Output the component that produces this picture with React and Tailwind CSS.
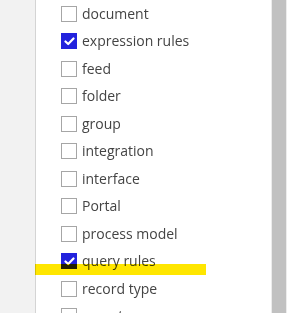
import React from "react";

const items = [
  ["document", false],
  ["expression rules", true],
  ["feed", false],
  ["folder", false],
  ["group", false],
  ["integration", false],
  ["interface", false],
  ["Portal", false],
  ["process model", false],
  ["query rules", true],
  ["record type", false],
  ["report", false],
];

function Box({ checked }) {
  if (checked) {
    return (
      <div className="w-4 h-4 bg-[#2222dd] flex items-center justify-center shrink-0">
        <svg width="11" height="9" viewBox="0 0 11 9">
          <path d="M1.5 4.5 L4.2 7 L9.5 1.5" fill="none" stroke="white" strokeWidth="2.2" strokeLinecap="round" strokeLinejoin="round" />
        </svg>
      </div>
    );
  }
  return <div className="w-4 h-4 border border-[#a6a6a6] bg-white shrink-0" />;
}

export default function App() {
  return (
    <div className="relative w-[301px] h-[313px] overflow-hidden bg-white flex" style={{ fontFamily: '"Open Sans", sans-serif' }}>
      <div className="w-[36px] h-full bg-[#f2f2f2] border-r border-[#d4d4d4] shrink-0" />
      <div className="flex-1 pl-[25px] flex flex-col">
        {items.map(([label, checked]) => (
          <div key={label} className="h-[27.5px] flex items-center gap-[5px] shrink-0">
            <Box checked={checked} />
            <span className="text-[14px] text-[#444] leading-none">{label}</span>
          </div>
        ))}
      </div>
      <div className="w-[16px] h-full bg-[#ececec] px-[1px] shrink-0">
        <div className="h-full bg-[#c1c1c1]" />
      </div>
      <div className="w-[14px] shrink-0" />
      <div className="absolute left-[35px] top-[264px] w-[171px] h-[11px] bg-[#ffe600] mix-blend-multiply" />
    </div>
  );
}
